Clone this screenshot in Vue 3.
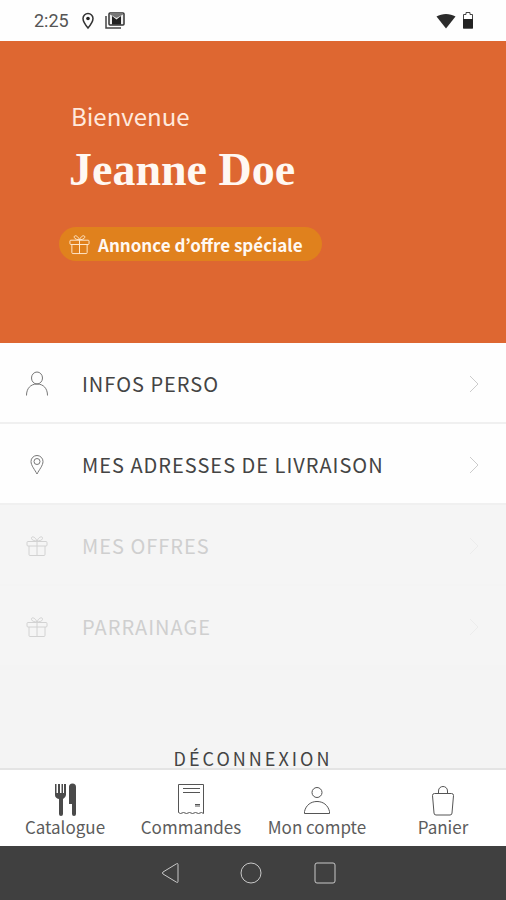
<template>
  <div class="app">
    <header class="status-bar">
      <span class="clock">2:25</span>
      <svg class="status-pin" viewBox="0 0 14 18" aria-hidden="true">
        <path d="M7 1.5a5 5 0 0 0-5 5C2 10 7 16 7 16s5-6 5-9.5a5 5 0 0 0-5-5z" fill="none" stroke="#333" stroke-width="1.5" />
        <circle cx="7" cy="6.5" r="1.8" fill="#222" />
      </svg>
      <svg class="status-mail" viewBox="0 0 20 17" aria-hidden="true">
        <path d="M1 4v12h15" fill="none" stroke="#444" stroke-width="1.5" />
        <rect x="4" y="1" width="15" height="12" rx="1" fill="#eee" stroke="#333" stroke-width="1.5" />
        <path d="M5 1h13v1.5L11.500 6 5 2.5z" fill="#777" />
        <path d="M7 12.500V4l4.500 3.500L16 4v8.500z" fill="#222" />
      </svg>
      <svg class="wifi" viewBox="0 0 20 16" aria-hidden="true">
        <path d="M0.5 3.500C6 0 14 0 19.500 3.500L10 15.500z" fill="#2b2b2b" />
      </svg>
      <svg class="battery" viewBox="0 0 12 17" aria-hidden="true">
        <path d="M4 0.5h4v2h2.500V16h-9V2.500H4z" fill="#fff" stroke="#444" />
        <path d="M1 7h10v9.500H1z" fill="#222" />
      </svg>
    </header>

    <section class="hero">
      <p class="welcome">Bienvenue</p>
      <h1 class="name">Jeanne Doe</h1>
      <button type="button" class="offer">
        <svg class="offer-icon" viewBox="0 0 22 22" aria-hidden="true">
          <path :d="icons.gift" />
        </svg>
        Annonce d’offre spéciale
      </button>
    </section>

    <main class="content">
      <ul class="menu">
        <li v-for="item in menuItems" :key="item.label">
          <button type="button" class="menu-item" :disabled="item.disabled">
            <svg class="menu-icon" viewBox="0 0 22 22" aria-hidden="true">
              <path :d="icons[item.icon]" />
            </svg>
            <span class="menu-label">{{ item.label }}</span>
            <svg class="chevron" viewBox="0 0 10 18" aria-hidden="true">
              <path d="M1 1l8 8-8 8" />
            </svg>
          </button>
        </li>
      </ul>
      <button type="button" class="logout">DÉCONNEXION</button>
    </main>

    <footer class="bottom">
      <nav class="tabs">
        <a v-for="tab in tabs" :key="tab.label" href="#" class="tab" @click.prevent>
          <svg class="tab-icon" viewBox="0 0 32 34" aria-hidden="true">
            <path :d="icons[tab.icon]" :class="{ solid: tab.icon === 'cutlery' }" />
          </svg>
          <span>{{ tab.label }}</span>
        </a>
      </nav>

      <div class="system-nav">
        <button type="button" class="back" aria-label="Retour">
          <svg viewBox="0 0 24 24"><path d="M19 4v16.500q0 1.500-1.500 0.700L4 13q-1.200-1 0-2L17.500 2.800q1.500-0.800 1.500 0.700z" /></svg>
        </button>
        <button type="button" aria-label="Accueil">
          <svg viewBox="0 0 24 24"><circle cx="12" cy="12" r="10" /></svg>
        </button>
        <button type="button" aria-label="Applications récentes">
          <svg viewBox="0 0 24 24"><rect x="2" y="2" width="20" height="20" rx="2" /></svg>
        </button>
      </div>
    </footer>
  </div>
</template>

<script setup>
const icons = {
  gift: 'M2 6.500h18q1 0 1 1v2.500q0 1-1 1H2q-1 0-1-1V7.500q0-1 1-1zM3 11v8.500q0 1 1 1h14q1 0 1-1V11M11 6.500v14M11 6C9 1 5 1 5.500 3.500 6 5.500 9 6 11 6zM11 6c2-5 6-5 5.500-2.500C16 5.500 13 6 11 6z',
  person: 'M11-1a5.500 6 0 1 0 0 12a5.500 6 0 1 0 0-12zM0.500 22.500c0-7 4-11.500 10.500-11.500s10.500 4.500 10.500 11.500',
  pin: 'M11 1.500a6 6 0 0 0-6 6c0 4 4 8.500 6 12.500c2-4 6-8.500 6-12.500a6 6 0 0 0-6-6zM11 4.500a3 3 0 1 0 0 6a3 3 0 1 0 0-6z',
  cutlery: 'M6 2h1.500v9h1.500V2h2v9h1.500V2h1.500v9h1V2H17v11q0 2-3 4v15q0 2-2 2t-2-2V17Q6 16 6 13zM20 5q0-3.500 3.500-3.500t3.500 3.500v27q0 2-2 2t-2-2V22h-3z',
  receipt: 'M3.500 2.500h25v29l-2-1-3 1-3-1-3 1-3-1-3 1-3-1-3 1-2-1zM8 6.500h17M8 10.500h17M20 22.500h5M20 24h5',
  account: 'M16 5.500a5 5 0 1 0 0 10a5 5 0 1 0 0-10zM3.500 31.500v-2C5 23 10 19.500 16 19.500S27 23 28.500 29.500v2z',
  bag: 'M7.500 11.500h17q2 0 2 2l-1.500 17.500q0 2-2 2H9q-2 0-2-2L5.500 13.500q0-2 2-2zM11.500 11.500V9c0-6 9-6 9 0v2.500'
}

const menuItems = [
  { label: 'INFOS PERSO', icon: 'person', disabled: false },
  { label: 'MES ADRESSES DE LIVRAISON', icon: 'pin', disabled: false },
  { label: 'MES OFFRES', icon: 'gift', disabled: true },
  { label: 'PARRAINAGE', icon: 'gift', disabled: true }
]

const tabs = [
  { label: 'Catalogue', icon: 'cutlery' },
  { label: 'Commandes', icon: 'receipt' },
  { label: 'Mon compte', icon: 'account' },
  { label: 'Panier', icon: 'bag' }
]
</script>

<style>
body {
  margin: 0;
}
</style>

<style scoped>
.app {
  display: flex;
  flex-direction: column;
  min-height: 100vh;
  background: #f4f4f4;
  color: #444;
  font-family: "Noto Sans CJK KR", "Open Sans", sans-serif;
}

button {
  padding: 0;
  border: 0;
  background: none;
  color: inherit;
  font: inherit;
  cursor: pointer;
}

svg {
  display: block;
  flex: none;
  overflow: visible;
}

.status-bar {
  display: flex;
  align-items: center;
  height: 41px;
  padding: 0 32px 0 34px;
  background: #fefefe;
  box-sizing: border-box;
}

.clock {
  color: #555;
  font: 18px Roboto, sans-serif;
}

.status-pin {
  width: 14px;
  height: 18px;
  margin-left: 12px;
}

.status-mail {
  width: 20px;
  height: 17px;
  margin-left: 10px;
}

.wifi {
  width: 20px;
  height: 16px;
  margin-left: auto;
}

.battery {
  width: 12px;
  height: 17px;
  margin-left: 6px;
}

.hero {
  display: flex;
  flex-direction: column;
  align-items: flex-start;
  height: 302px;
  padding: 59px 59px 0;
  background: #de6731;
  color: #fff8f2;
  box-sizing: border-box;
}

.welcome {
  margin: 0 12px;
  color: #ffe9dc;
  font-size: 24px;
  line-height: 32px;
}

.name {
  margin: 10px 10px 0;
  font-family: "Liberation Serif", serif;
  font-size: 46px;
  line-height: 56px;
}

.offer {
  display: flex;
  align-items: center;
  gap: 8px;
  height: 34px;
  margin-top: 29px;
  padding: 0 19px 0 10px;
  border-radius: 17px;
  background: #e0811d;
  font-size: 17px;
  font-weight: 700;
}

.offer-icon {
  width: 21px;
  height: 21px;
  fill: none;
  stroke: #ffe9cf;
}

.content {
  display: flex;
  flex: 1;
  flex-direction: column;
}

.menu {
  margin: 0;
  padding: 0;
  list-style: none;
}

.menu-item {
  display: flex;
  align-items: center;
  width: 100%;
  height: 81px;
  padding: 2px 27px 0 26px;
  border-bottom: 2px solid #f0f0f0;
  background: #fefefe;
  text-align: left;
}

.menu-item:disabled {
  border-color: #f4f4f4;
  background: #f5f5f5;
  color: #cfcfcf;
  cursor: default;
}

.menu-icon {
  width: 22px;
  height: 22px;
  margin-right: 34px;
  fill: none;
  stroke: #777;
}

.menu-item:disabled .menu-icon {
  stroke: #d2d2d2;
}

.menu-label {
  flex: 1;
  font-size: 20px;
  letter-spacing: 1px;
}

.chevron {
  width: 10px;
  height: 18px;
  fill: none;
  stroke: #ccc;
}

.menu-item:disabled .chevron {
  stroke: #ececec;
}

.logout {
  align-self: center;
  margin-top: auto;
  font-size: 18px;
  line-height: 20px;
  letter-spacing: 3px;
}

.bottom {
  position: sticky;
  bottom: 0;
}

.tabs {
  display: grid;
  grid-template-columns: repeat(4, 1fr);
  height: 78px;
  padding-left: 2px;
  border-top: 2px solid #e4e4e4;
  background: #fff;
  box-sizing: border-box;
}

.tab {
  display: flex;
  flex-direction: column;
  align-items: center;
  padding-top: 12px;
  color: #5c5c5c;
  font-size: 17px;
  line-height: 22px;
  text-decoration: none;
}

.tab-icon {
  width: 32px;
  height: 34px;
  fill: none;
  stroke: #555;
}

.tab-icon .solid {
  fill: #4a4a4a;
  stroke: none;
}

.system-nav {
  display: flex;
  align-items: center;
  justify-content: center;
  gap: 50px;
  height: 54px;
  padding-right: 10px;
  background: #404040;
}

.back {
  width: 30px;
}

.system-nav svg {
  width: 24px;
  height: 24px;
  fill: none;
  stroke: #c8c8c8;
}
</style>
